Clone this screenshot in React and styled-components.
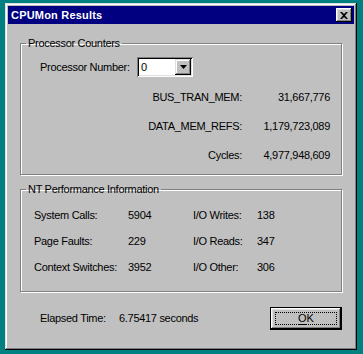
import React from "react";
import styled, { createGlobalStyle } from "styled-components";

const Global = createGlobalStyle`
  html, body { margin: 0; padding: 0; }
  body {
    background: #008080;
    font-family: "Liberation Sans", Arial, sans-serif;
    font-size: 11px;
    letter-spacing: -0.3px;
    color: #000;
  }
  #root { width: 363px; height: 354px; overflow: hidden; }
`;

const Screen = styled.div`
  width: 363px;
  height: 354px;
  padding: 3px 0 0 5px;
  box-sizing: border-box;
`;

const Window = styled.div`
  width: 352px;
  height: 347px;
  box-sizing: border-box;
  background: #c0c0c0;
  padding: 3px;
  display: flex;
  flex-direction: column;
  box-shadow: inset -1px -1px #000, inset 1px 1px #dfdfdf,
    inset -2px -2px #808080, inset 2px 2px #fff;
`;

const TitleBar = styled.div`
  height: 18px;
  background: #000080;
  display: flex;
  align-items: center;
  justify-content: space-between;
  padding: 0 2px 0 3px;
`;

const Title = styled.span`
  color: #fff;
  font-weight: bold;
  font-size: 11px;
  letter-spacing: 0.2px;
  line-height: 13px;
`;

const CloseButton = styled.div`
  width: 16px;
  height: 14px;
  box-sizing: border-box;
  background: #c0c0c0;
  display: flex;
  align-items: center;
  justify-content: center;
  box-shadow: inset -1px -1px #000, inset 1px 1px #fff,
    inset -2px -2px #808080, inset 2px 2px #dfdfdf;
`;

const Content = styled.div`
  flex: 1;
  display: flex;
  flex-direction: column;
  padding: 13px 12px 0 12px;
`;

const Group = styled.fieldset`
  margin: 0 0 ${(p) => p.$gap || 0}px 0;
  padding: 0 0 ${(p) => p.$pb}px 0;
  border: 1px solid #808080;
  box-shadow: 1px 1px 0 #fff, inset 1px 1px 0 #fff;
  min-width: 0;
`;

const Legend = styled.legend`
  margin-left: 5px;
  padding: 0 2px;
  line-height: 13px;
`;

const ProcRow = styled.div`
  display: flex;
  align-items: center;
  margin-top: 7px;
  padding-left: 19px;
`;

const ProcLabel = styled.span`
  width: 97px;
  line-height: 13px;
`;

const Combo = styled.div`
  width: 56px;
  height: 20px;
  box-sizing: border-box;
  background: #fff;
  display: flex;
  align-items: center;
  padding: 2px 2px 2px 4px;
  box-shadow: inset 1px 1px #808080, inset -1px -1px #fff,
    inset 2px 2px #000, inset -2px -2px #dfdfdf;
`;

const ComboText = styled.span`
  flex: 1;
  line-height: 13px;
`;

const ComboButton = styled.div`
  width: 16px;
  height: 16px;
  box-sizing: border-box;
  background: #c0c0c0;
  display: flex;
  align-items: center;
  justify-content: center;
  box-shadow: inset -1px -1px #000, inset 1px 1px #dfdfdf,
    inset -2px -2px #808080, inset 2px 2px #fff;
`;

const CounterGrid = styled.div`
  display: grid;
  grid-template-columns: 221px 88px;
  row-gap: 16px;
  margin-top: 14px;
  line-height: 13px;
  text-align: right;
`;

const PerfGrid = styled.div`
  display: grid;
  grid-template-columns: 94px 65px 64px auto;
  row-gap: 13px;
  margin-top: 13px;
  padding-left: 13px;
  line-height: 13px;
`;

const Footer = styled.div`
  display: flex;
  align-items: center;
  margin-top: 15px;
  padding-left: 20px;
`;

const FooterLabel = styled.span`
  width: ${(p) => p.$w}px;
  line-height: 13px;
`;

const Spacer = styled.div`
  flex: 1;
`;

const OkButton = styled.div`
  width: 72px;
  height: 23px;
  box-sizing: border-box;
  border: 1px solid #000;
  background: #c0c0c0;
  padding: 4px;
  display: flex;
  box-shadow: inset -1px -1px #000, inset 1px 1px #fff,
    inset -2px -2px #808080, inset 2px 2px #dfdfdf;
`;

const Focus = styled.div`
  flex: 1;
  border: 1px dotted #000;
  display: flex;
  align-items: center;
  justify-content: center;
  line-height: 11px;
  letter-spacing: 0;
  u { text-decoration: underline; text-underline-offset: 2px; }
`;

const counters = [
  ["BUS_TRAN_MEM:", "31,667,776"],
  ["DATA_MEM_REFS:", "1,179,723,089"],
  ["Cycles:", "4,977,948,609"],
];

const perf = [
  ["System Calls:", "5904", "I/O Writes:", "138"],
  ["Page Faults:", "229", "I/O Reads:", "347"],
  ["Context Switches:", "3952", "I/O Other:", "306"],
];

export default function App() {
  return (
    <Screen>
      <Global />
      <Window>
        <TitleBar>
          <Title>CPUMon Results</Title>
          <CloseButton>
            <svg width="8" height="7" viewBox="0 0 8 7">
              <path d="M0 0h2l2 2 2-2h2L5 3.5 8 7H6L4 5 2 7H0l3-3.5z" fill="#000" />
            </svg>
          </CloseButton>
        </TitleBar>
        <Content>
          <Group $pb={12} $gap={8}>
            <Legend>Processor Counters</Legend>
            <ProcRow>
              <ProcLabel>Processor Number:</ProcLabel>
              <Combo>
                <ComboText>0</ComboText>
                <ComboButton>
                  <svg width="7" height="4" viewBox="0 0 7 4">
                    <path d="M0 0h7L3.5 4z" fill="#000" />
                  </svg>
                </ComboButton>
              </Combo>
            </ProcRow>
            <CounterGrid>
              {counters.map(([k, v]) => (
                <React.Fragment key={k}>
                  <span>{k}</span>
                  <span>{v}</span>
                </React.Fragment>
              ))}
            </CounterGrid>
          </Group>
          <Group $pb={17}>
            <Legend>NT Performance Information</Legend>
            <PerfGrid>
              {perf.map((r) => (
                <React.Fragment key={r[0]}>
                  {r.map((c, i) => (
                    <span key={i}>{c}</span>
                  ))}
                </React.Fragment>
              ))}
            </PerfGrid>
          </Group>
          <Footer>
            <FooterLabel $w={79}>Elapsed Time:</FooterLabel>
            <FooterLabel>6.75417 seconds</FooterLabel>
            <Spacer />
            <OkButton>
              <Focus>
                <span>
                  <u>O</u>K
                </span>
              </Focus>
            </OkButton>
          </Footer>
        </Content>
      </Window>
    </Screen>
  );
}
